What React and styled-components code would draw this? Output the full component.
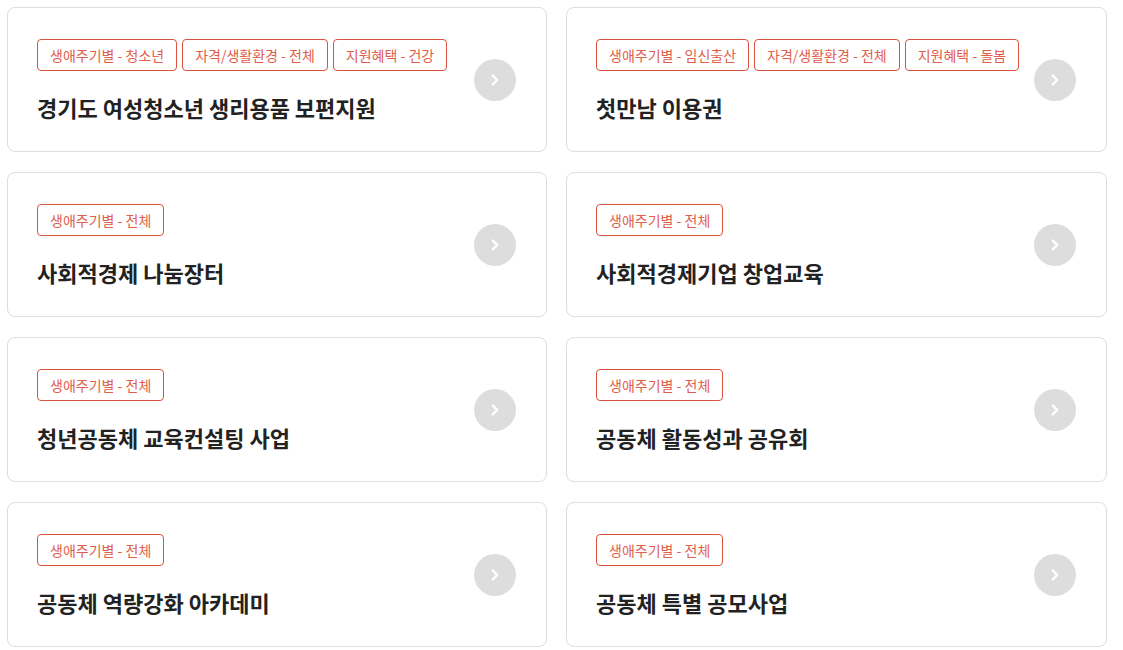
import React from "react";
import styled, { createGlobalStyle } from "styled-components";

const items = [
  {
    title: "경기도 여성청소년 생리용품 보편지원",
    tags: ["생애주기별 - 청소년", "자격/생활환경 - 전체", "지원혜택 - 건강"],
  },
  {
    title: "첫만남 이용권",
    tags: ["생애주기별 - 임신출산", "자격/생활환경 - 전체", "지원혜택 - 돌봄"],
  },
  { title: "사회적경제 나눔장터", tags: ["생애주기별 - 전체"] },
  { title: "사회적경제기업 창업교육", tags: ["생애주기별 - 전체"] },
  { title: "청년공동체 교육컨설팅 사업", tags: ["생애주기별 - 전체"] },
  { title: "공동체 활동성과 공유회", tags: ["생애주기별 - 전체"] },
  { title: "공동체 역량강화 아카데미", tags: ["생애주기별 - 전체"] },
  { title: "공동체 특별 공모사업", tags: ["생애주기별 - 전체"] },
];

function App() {
  return (
    <>
      <GlobalStyle />
      <Grid>
        {items.map((item) => (
          <Card key={item.title} href="#">
            <Body>
              <Tags>
                {item.tags.map((tag) => (
                  <Tag key={tag}>{tag}</Tag>
                ))}
              </Tags>
              <Title>{item.title}</Title>
            </Body>
            <Arrow>
              <svg width="14" height="14" viewBox="0 0 14 14">
                <path
                  d="M4.8 2.6 L9.2 7 L4.8 11.4"
                  fill="none"
                  stroke="#fff"
                  strokeWidth="2.4"
                  strokeLinecap="round"
                  strokeLinejoin="round"
                />
              </svg>
            </Arrow>
          </Card>
        ))}
      </Grid>
    </>
  );
}

export default App;

const GlobalStyle = createGlobalStyle`
  body {
    margin: 0;
    background: #fff;
    font-family: "Noto Sans CJK KR", "Noto Sans", sans-serif;
  }
`;

const Grid = styled.div`
  display: grid;
  grid-template-columns: 540px 541px;
  column-gap: 19px;
  row-gap: 20px;
  padding: 7px;
`;

const Card = styled.a`
  box-sizing: border-box;
  height: 145px;
  border: 1px solid #dddddd;
  border-radius: 8px;
  padding: 0 29px 0 29px;
  display: flex;
  align-items: center;
  justify-content: space-between;
  text-decoration: none;
  background: #fff;
`;

const Body = styled.div`
  display: flex;
  flex-direction: column;
  gap: 21px;
  padding-top: 1px;
`;

const Tags = styled.div`
  display: flex;
  gap: 5px;
`;

const Tag = styled.span`
  box-sizing: border-box;
  height: 32px;
  display: inline-flex;
  align-items: center;
  padding: 0 12px;
  border: 1px solid #d9533e;
  border-radius: 4px;
  color: #df5e4c;
  font-size: 14px;
`;

const Title = styled.div`
  font-size: 22px;
  font-weight: 700;
  color: #222;
  line-height: 30px;
`;

const Arrow = styled.span`
  width: 42px;
  height: 42px;
  border-radius: 50%;
  background: #dddddd;
  display: flex;
  align-items: center;
  justify-content: center;
  flex-shrink: 0;
  margin-right: 1px;
`;
